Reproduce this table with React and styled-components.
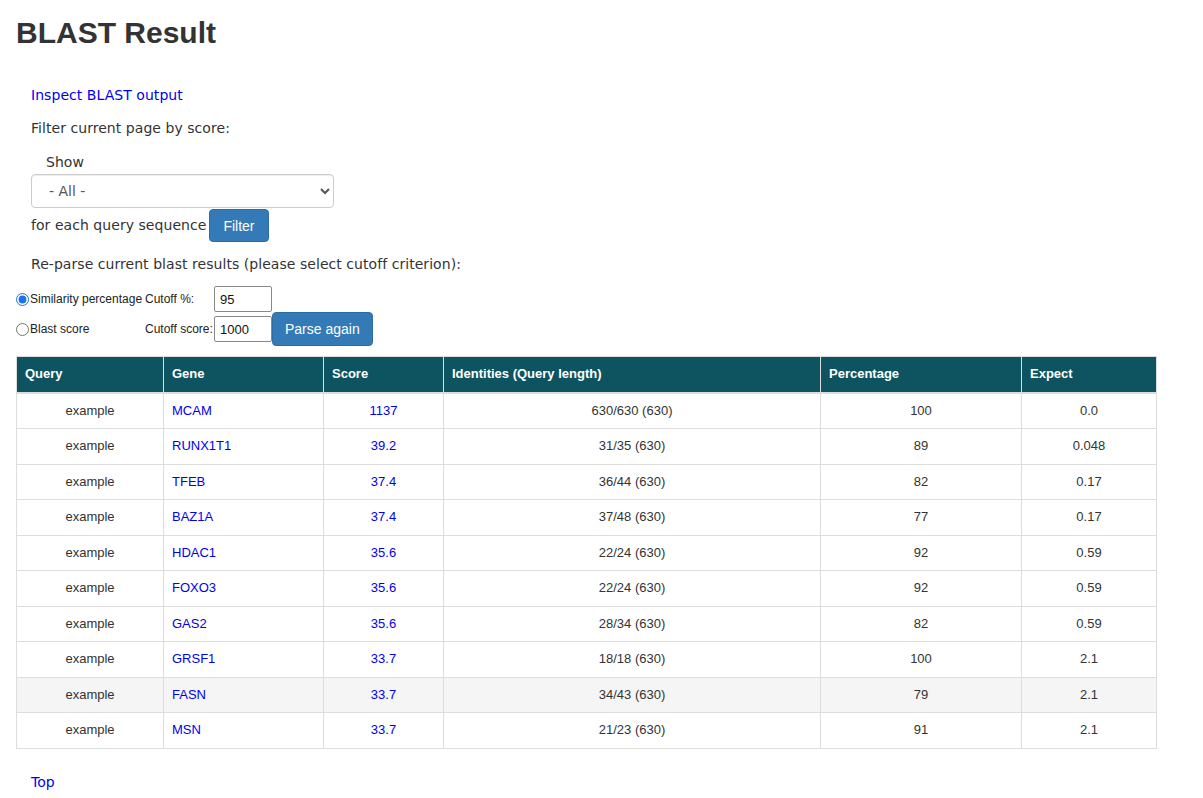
import React from 'react';
import styled, { createGlobalStyle } from 'styled-components';

const GlobalStyle = createGlobalStyle`
    html, body {
        margin: 0;
        padding: 0;
        background: #fff;
    }
    body {
        font-family: "DejaVu Sans", Verdana, sans-serif;
        font-size: 14px;
        color: #333;
    }
`

const rows = [
    { gene: 'MCAM', score: '1137', ident: '630/630 (630)', pct: '100', expect: '0.0' },
    { gene: 'RUNX1T1', score: '39.2', ident: '31/35 (630)', pct: '89', expect: '0.048' },
    { gene: 'TFEB', score: '37.4', ident: '36/44 (630)', pct: '82', expect: '0.17' },
    { gene: 'BAZ1A', score: '37.4', ident: '37/48 (630)', pct: '77', expect: '0.17' },
    { gene: 'HDAC1', score: '35.6', ident: '22/24 (630)', pct: '92', expect: '0.59' },
    { gene: 'FOXO3', score: '35.6', ident: '22/24 (630)', pct: '92', expect: '0.59' },
    { gene: 'GAS2', score: '35.6', ident: '28/34 (630)', pct: '82', expect: '0.59' },
    { gene: 'GRSF1', score: '33.7', ident: '18/18 (630)', pct: '100', expect: '2.1' },
    { gene: 'FASN', score: '33.7', ident: '34/43 (630)', pct: '79', expect: '2.1', hover: true },
    { gene: 'MSN', score: '33.7', ident: '21/23 (630)', pct: '91', expect: '2.1' },
];

export default function App() {
    return (
        <Page>
            <GlobalStyle />
            <Title>BLAST Result</Title>
            <Content>
                <Line><Link href="#">Inspect BLAST output</Link></Line>
                <Line $top={13}>Filter current page by score:</Line>
                <Line $top={14} $indent={15}>Show</Line>
                <Select defaultValue="all">
                    <option value="all">- All -</option>
                    <option value="1">Best hit</option>
                    <option value="5">Top 5</option>
                </Select>
                <FilterRow>
                    <span>for each query sequence</span>
                    <Button>Filter</Button>
                </FilterRow>
                <Line $top={12}>Re-parse current blast results (please select cutoff criterion):</Line>
            </Content>
            <ParseForm>
                <RadioLabel>
                    <Radio type="radio" name="crit" defaultChecked />Similarity percentage
                </RadioLabel>
                <SmallLabel>Cutoff %:</SmallLabel>
                <NumInput defaultValue="95" />
                <span />
                <RadioLabel>
                    <Radio type="radio" name="crit" />Blast score
                </RadioLabel>
                <SmallLabel>Cutoff score:</SmallLabel>
                <NumInput defaultValue="1000" />
                <Button $wide>Parse again</Button>
            </ParseForm>
            <Table>
                <colgroup>
                    <col style={{ width: 147 }} />
                    <col style={{ width: 160 }} />
                    <col style={{ width: 120 }} />
                    <col style={{ width: 377 }} />
                    <col style={{ width: 201 }} />
                    <col style={{ width: 135 }} />
                </colgroup>
                <thead>
                    <tr>
                        <Th>Query</Th>
                        <Th>Gene</Th>
                        <Th>Score</Th>
                        <Th>Identities (Query length)</Th>
                        <Th>Percentage</Th>
                        <Th>Expect</Th>
                    </tr>
                </thead>
                <tbody>
                    {rows.map((r) => (
                        <Tr key={r.gene} $hover={r.hover}>
                            <Td $center>example</Td>
                            <Td><CellLink href="#">{r.gene}</CellLink></Td>
                            <Td $center><CellLink href="#">{r.score}</CellLink></Td>
                            <Td $center>{r.ident}</Td>
                            <Td $center>{r.pct}</Td>
                            <Td $center>{r.expect}</Td>
                        </Tr>
                    ))}
                </tbody>
            </Table>
            <Footer><Link href="#">Top</Link></Footer>
        </Page>
    )
}

const Page = styled.div`
    padding: 0 0 10px 16px;
    width: 1140px;
`

const Title = styled.h1`
    margin: 15px 0 0 0;
    font-family: "Liberation Sans", Arial, sans-serif;
    font-size: 30px;
    line-height: 36px;
    font-weight: bold;
    color: #333;
`

const Content = styled.div`
    padding: 34px 0 0 15px;
    letter-spacing: 0.05px;
`

const Line = styled.div`
    line-height: 20px;
    margin-top: ${(p) => p.$top || 0}px;
    padding-left: ${(p) => p.$indent || 0}px;
`

const Link = styled.a`
    color: #0000ee;
    text-decoration: none;
`

const Select = styled.select`
    display: block;
    margin-top: 2px;
    width: 303px;
    height: 34px;
    padding: 6px 12px 6px 13px;
    border: 1px solid #ccc;
    border-radius: 4px;
    background: #fff;
    color: #555;
    font-family: "DejaVu Sans", Verdana, sans-serif;
    font-size: 14px;
    box-shadow: inset 0 1px 1px rgba(0, 0, 0, .075);
`

const FilterRow = styled.div`
    display: flex;
    align-items: center;
    gap: 3px;
    height: 34px;
`

const Button = styled.button`
    height: ${(p) => (p.$wide ? 34 : 33)}px;
    padding: 6px ${(p) => (p.$wide ? 12 : 13)}px;
    border: 1px solid #2e6da4;
    border-radius: 4px;
    background: #337ab7;
    color: #fff;
    font-family: "Liberation Sans", Arial, sans-serif;
    font-size: 14px;
    line-height: 20px;
    letter-spacing: 0;
    cursor: pointer;
`

const ParseForm = styled.div`
    display: grid;
    grid-template-columns: 129px 69px 58px auto;
    grid-template-rows: 26px 34px;
    align-items: center;
    justify-items: start;
    margin-top: 12px;
    font-family: "Liberation Sans", Arial, sans-serif;
    font-size: 12px;
    color: #222;
`

const RadioLabel = styled.label`
    display: flex;
    align-items: center;
    white-space: nowrap;
`

const Radio = styled.input`
    width: 13px;
    height: 13px;
    margin: 0 1px 0 0;
    accent-color: #1a73e8;
`

const SmallLabel = styled.span`
    white-space: nowrap;
`

const NumInput = styled.input`
    box-sizing: border-box;
    width: 58px;
    height: 26px;
    padding: 1px 5px;
    border: 1px solid #888;
    border-radius: 2px;
    font-family: "Liberation Sans", Arial, sans-serif;
    font-size: 13px;
    color: #111;
`

const Table = styled.table`
    margin-top: 10px;
    width: 1140px;
    border-collapse: collapse;
    table-layout: fixed;
    font-family: "Liberation Sans", Arial, sans-serif;
    font-size: 13px;
    color: #333;
`

const Th = styled.th`
    padding: 8px;
    line-height: 18.57px;
    text-align: left;
    font-weight: bold;
    color: #fff;
    background: #0d5460;
    border: 1px solid #ddd;
    border-bottom: 2px solid #ddd;
`

const Tr = styled.tr`
    background: ${(p) => (p.$hover ? '#f5f5f5' : '#fff')};
`

const Td = styled.td`
    padding: 8px;
    line-height: 18.5px;
    text-align: ${(p) => (p.$center ? 'center' : 'left')};
    border: 1px solid #ddd;
`

const CellLink = styled.a`
    color: #0000ee;
    text-decoration: none;
`

const Footer = styled.div`
    margin-top: 23px;
    padding-left: 15px;
    line-height: 20px;
`
